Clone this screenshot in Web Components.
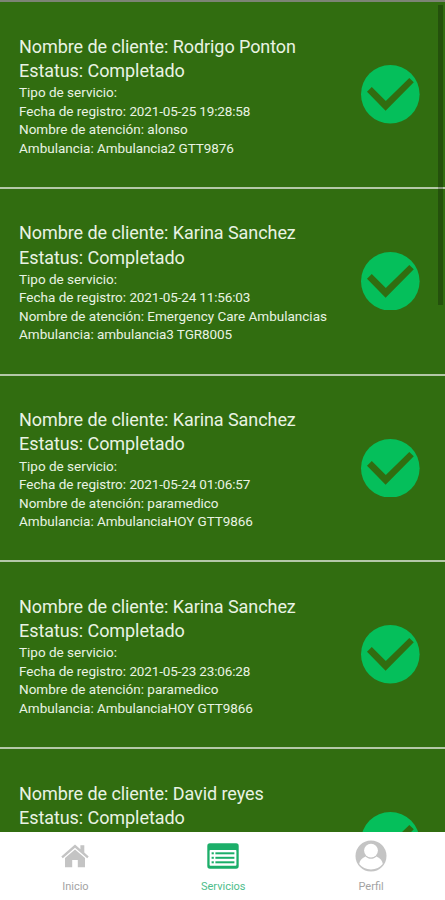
<!DOCTYPE html>
<html lang="es">
<head>
<meta charset="utf-8">
<title>Servicios</title>
<style>
    body {
        margin: 0;
        font-family: Roboto, "Liberation Sans", sans-serif;
    }
</style>
</head>
<body>

<services-screen>
    <service-card>
        <span slot="client">Rodrigo Ponton</span>
        <span slot="status">Completado</span>
        <span slot="date">2021-05-25 19:28:58</span>
        <span slot="attention">alonso</span>
        <span slot="ambulance">Ambulancia2 GTT9876</span>
    </service-card>
    <service-card>
        <span slot="client">Karina Sanchez</span>
        <span slot="status">Completado</span>
        <span slot="date">2021-05-24 11:56:03</span>
        <span slot="attention">Emergency Care Ambulancias</span>
        <span slot="ambulance">ambulancia3 TGR8005</span>
    </service-card>
    <service-card>
        <span slot="client">Karina Sanchez</span>
        <span slot="status">Completado</span>
        <span slot="date">2021-05-24 01:06:57</span>
        <span slot="attention">paramedico</span>
        <span slot="ambulance">AmbulanciaHOY GTT9866</span>
    </service-card>
    <service-card>
        <span slot="client">Karina Sanchez</span>
        <span slot="status">Completado</span>
        <span slot="date">2021-05-23 23:06:28</span>
        <span slot="attention">paramedico</span>
        <span slot="ambulance">AmbulanciaHOY GTT9866</span>
    </service-card>
    <service-card short>
        <span slot="client">David reyes</span>
        <span slot="status">Completado</span>
    </service-card>

    <tab-bar slot="tabs">
        <tab-item>
            <svg slot="icon" width="28" height="24" viewBox="0 0 28 24" fill="#c4c4c4">
                <path d="M14 0.5 L0.3 12.5 L1.8 14.2 L14 3.8 L26.2 14.2 L27.7 12.5 L23.3 8.6 V1.2 H19.4 V5.2 Z"/>
                <path d="M14 5.5 L4 14 V23.2 H11.2 V16 H16.8 V23.2 H24 V14 Z"/>
            </svg>
            Inicio
        </tab-item>
        <tab-item active>
            <svg slot="icon" width="32" height="26" viewBox="0 0 32 26">
                <rect x="0.3" y="0.3" width="31.4" height="25.4" rx="2.6" fill="#1cae69"/>
                <rect x="2.6" y="7" width="26.8" height="15.8" rx="0.8" fill="#fff"/>
                <g fill="#1cae69">
                    <rect x="4.6" y="9.3" width="2.2" height="2"/>
                    <rect x="4.6" y="13.8" width="2.2" height="2"/>
                    <rect x="4.6" y="18.3" width="2.2" height="2"/>
                    <rect x="8.4" y="9.3" width="19" height="2"/>
                    <rect x="8.4" y="13.8" width="19" height="2"/>
                    <rect x="8.4" y="18.3" width="19" height="2"/>
                </g>
            </svg>
            Servicios
        </tab-item>
        <tab-item>
            <svg slot="icon" width="32" height="32" viewBox="0 0 32 32">
                <circle cx="16" cy="16" r="15.5" fill="#c4c4c4"/>
                <path d="M10.6 16.4 C6.4 18 4.6 20.6 4.2 24 C7 27.6 11 29.4 16 29.4 C21 29.4 25 27.6 27.8 24 C27.4 20.6 25.6 18 21.4 16.4 C18.4 19.6 13.6 19.6 10.6 16.4 Z" fill="#fff"/>
                <circle cx="16" cy="10.6" r="6.9" fill="#fff"/>
            </svg>
            Perfil
        </tab-item>
    </tab-bar>
</services-screen>

<template id="services-screen">
<style>
    :host {
        display: flex;
        flex-direction: column;
        position: relative;
        height: 900px;
        overflow: hidden;
        background: #316d10;
    }

    .list {
        flex: 1;
        min-height: 0;
        overflow: hidden;
        border-top: 2px solid #7c8475;
    }

    .scrollbar {
        position: absolute;
        top: 5px;
        right: 2px;
        width: 5px;
        height: 300px;
        background: rgba(0, 0, 0, 0.25);
    }
</style>
<div class="list"><slot></slot></div>
<div class="scrollbar"></div>
<slot name="tabs"></slot>
</template>

<template id="service-card">
<style>
    :host {
        display: flex;
        align-items: center;
        justify-content: space-between;
        box-sizing: border-box;
        height: 186.8px;
        padding: 0 25.5px 0 19px;
        border-bottom: 2px solid #b4c8a8;
        color: #e9f3e3;
    }

    .text {
        padding-top: 3px;
    }

    .title {
        font-size: 18px;
        line-height: 24.2px;
        letter-spacing: -0.07px;
        white-space: nowrap;
    }

    .detail {
        font-size: 13.5px;
        line-height: 18.6px;
        white-space: nowrap;
    }

    ::slotted([slot="date"]) {
        letter-spacing: -0.15px;
    }

    ::slotted([slot="ambulance"]) {
        letter-spacing: -0.07px;
    }

    svg {
        flex: none;
    }
</style>
<div class="text">
    <div class="title">Nombre de cliente: <slot name="client"></slot></div>
    <div class="title">Estatus: <slot name="status"></slot></div>
    <div class="details">
        <div class="detail">Tipo de servicio: <slot name="type"></slot></div>
        <div class="detail">Fecha de registro: <slot name="date"></slot></div>
        <div class="detail">Nombre de atención: <slot name="attention"></slot></div>
        <div class="detail">Ambulancia: <slot name="ambulance"></slot></div>
    </div>
</div>
<svg width="58.6" height="58.6" viewBox="0 0 58.6 58.6">
    <circle cx="29.3" cy="29.3" r="29.3" fill="#05bf5b"/>
    <path d="M6 26.8 L10.8 22.1 L24.8 36 L48.3 12.9 L52.8 17.3 L24.6 45.7 Z" fill="#316d10"/>
</svg>
</template>

<template id="tab-bar">
<style>
    :host {
        display: grid;
        grid-template-columns: repeat(3, 1fr);
        flex: none;
        box-sizing: border-box;
        height: 68px;
        padding-left: 1.5px;
        background: #fff;
    }
</style>
<slot></slot>
</template>

<template id="tab-item">
<style>
    :host {
        display: flex;
        flex-direction: column;
        align-items: center;
        padding-top: 7.5px;
        color: #a3a3a3;
        font-size: 11px;
        line-height: 14px;
    }

    :host([active]) {
        color: #4dbd8b;
    }

    .icon {
        display: flex;
        align-items: center;
        height: 32px;
        margin-bottom: 8.5px;
    }
</style>
<div class="icon"><slot name="icon"></slot></div>
<div class="label"><slot></slot></div>
</template>

<script>
class TemplateElement extends HTMLElement {
    constructor() {
        super()

        const template = document.getElementById(this.localName)
        const shadow = this.attachShadow({mode: "open"})
        shadow.append(template.content.cloneNode(true))
    }
}

class ServiceCard extends TemplateElement {
    connectedCallback() {
        // keep the space of the detail rows when there is nothing to list
        if (this.hasAttribute("short")) {
            const details = this.shadowRoot.querySelector(".details")
            details.style.height = "74.4px"
            details.replaceChildren()
        }
    }
}

customElements.define("services-screen", class extends TemplateElement {})
customElements.define("service-card", ServiceCard)
customElements.define("tab-bar", class extends TemplateElement {})
customElements.define("tab-item", class extends TemplateElement {})
</script>
</body>
</html>
